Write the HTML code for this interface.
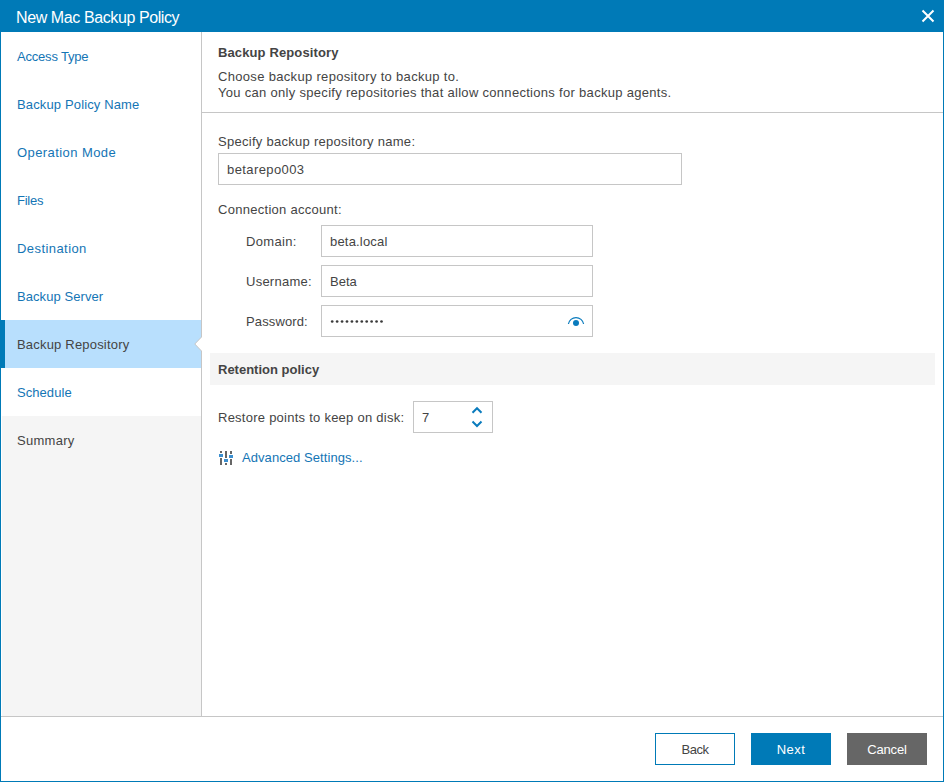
<!DOCTYPE html>
<html><head><meta charset="utf-8">
<style>
html,body{margin:0;padding:0;}
body{width:944px;height:782px;position:relative;overflow:hidden;background:#fff;font-family:"Liberation Sans",sans-serif;font-size:13px;color:#444;}
.a{position:absolute;}
.t{position:absolute;white-space:pre;line-height:16px;}
#title{left:0;top:0;width:944px;height:32px;background:#007ab7;}
#win{left:0;top:32px;width:942px;height:749px;border:1px solid #007ab7;border-top:none;}
#nav{left:1px;top:32px;width:200px;height:684px;background:#fff;}
#navsep{left:201px;top:32px;width:1px;height:684px;background:#c6c6c6;}
.nav{position:absolute;left:17px;color:#1475b5;white-space:pre;line-height:16px;}
#footsep{left:1px;top:716px;width:942px;height:1px;background:#c6c6c6;}
.inp{position:absolute;box-sizing:border-box;border:1px solid #c6c6c6;background:#fff;}
.btn{position:absolute;box-sizing:border-box;top:733px;width:80px;height:32px;text-align:center;line-height:30px;}
</style></head><body>
<div id="title" class="a"></div>
<div class="t" style="left:16px;top:9px;color:#fff;font-size:16px;line-height:18px;letter-spacing:-0.4px;">New Mac Backup Policy</div>
<svg class="a" style="left:920px;top:8px" width="16" height="16" viewBox="0 0 16 16"><path d="M2.5 2.5 L13.5 13.5 M13.5 2.5 L2.5 13.5" stroke="#fff" stroke-width="2" fill="none"/></svg>
<div id="win" class="a"></div>

<!-- nav -->
<div class="a" style="left:2px;top:416px;width:199px;height:300px;background:#f5f5f5;"></div>
<div class="a" style="left:0px;top:320px;width:201px;height:48px;background:#b8dffd;"></div>
<div class="a" style="left:0px;top:320px;width:5px;height:48px;background:#007ab7;"></div>
<div id="navsep" class="a"></div>
<svg class="a" style="left:193px;top:335px" width="10" height="18" viewBox="0 0 10 18"><path d="M8.5 0 L8.5 2 L1.8 9 L8.5 16 L8.5 18 L10 18 L10 0 Z" fill="#fff"/><path d="M8.5 0 L8.5 2 L1.8 9 L8.5 16 L8.5 18" stroke="#c6c6c6" stroke-width="1" fill="none"/></svg>
<div class="nav" style="top:49px;letter-spacing:-0.20px;">Access Type</div>
<div class="nav" style="top:97px;letter-spacing:0.14px;">Backup Policy Name</div>
<div class="nav" style="top:145px;letter-spacing:0.42px;">Operation Mode</div>
<div class="nav" style="top:193px;letter-spacing:-0.25px;">Files</div>
<div class="nav" style="top:241px;letter-spacing:0.43px;">Destination</div>
<div class="nav" style="top:289px;letter-spacing:0.07px;">Backup Server</div>
<div class="nav" style="top:337px;letter-spacing:0.19px;color:#444;">Backup Repository</div>
<div class="nav" style="top:385px;letter-spacing:0.06px;">Schedule</div>
<div class="nav" style="top:433px;letter-spacing:0.27px;color:#444;">Summary</div>

<!-- header -->
<div class="t" style="left:218px;top:45px;letter-spacing:0.12px;font-weight:bold;">Backup Repository</div>
<div class="t" style="left:218px;top:69px;letter-spacing:0.32px;">Choose backup repository to backup to.</div>
<div class="t" style="left:218px;top:85px;letter-spacing:0.30px;">You can only specify repositories that allow connections for backup agents.</div>
<div class="a" style="left:202px;top:112px;width:741px;height:1px;background:#c6c6c6;"></div>

<!-- form -->
<div class="t" style="left:218px;top:134px;letter-spacing:0.28px;">Specify backup repository name:</div>
<div class="inp" style="left:218px;top:153px;width:464px;height:32px;"></div>
<div class="t" style="left:227px;top:162px;letter-spacing:0.40px;">betarepo003</div>
<div class="t" style="left:218px;top:202px;letter-spacing:0.28px;">Connection account:</div>
<div class="t" style="left:246px;top:234px;letter-spacing:0.33px;">Domain:</div>
<div class="inp" style="left:321px;top:225px;width:272px;height:32px;"></div>
<div class="t" style="left:330px;top:234px;letter-spacing:0.19px;">beta.local</div>
<div class="t" style="left:246px;top:274px;letter-spacing:0.25px;">Username:</div>
<div class="inp" style="left:321px;top:265px;width:272px;height:32px;"></div>
<div class="t" style="left:330px;top:274px;letter-spacing:0.00px;">Beta</div>
<div class="t" style="left:246px;top:314px;letter-spacing:0.12px;">Password:</div>
<div class="inp" style="left:321px;top:305px;width:272px;height:32px;"></div>
<svg class="a" style="left:330px;top:317px" width="56" height="9" viewBox="0 0 56 9" fill="#3a3a3a"><circle cx="2.20" cy="4.5" r="1.35"/><circle cx="7.13" cy="4.5" r="1.35"/><circle cx="12.06" cy="4.5" r="1.35"/><circle cx="16.99" cy="4.5" r="1.35"/><circle cx="21.92" cy="4.5" r="1.35"/><circle cx="26.85" cy="4.5" r="1.35"/><circle cx="31.78" cy="4.5" r="1.35"/><circle cx="36.71" cy="4.5" r="1.35"/><circle cx="41.64" cy="4.5" r="1.35"/><circle cx="46.57" cy="4.5" r="1.35"/><circle cx="51.50" cy="4.5" r="1.35"/></svg>
<svg class="a" style="left:566px;top:313px" width="20" height="14" viewBox="0 0 20 14"><path d="M2.4 11 A7.7 7.7 0 0 1 17.6 11" stroke="#0a7bbd" stroke-width="1.2" fill="none"/><circle cx="10" cy="10" r="3" fill="#0a7bbd"/></svg>

<div class="a" style="left:210px;top:353px;width:725px;height:32px;background:#f5f5f5;"></div>
<div class="t" style="left:218px;top:362px;letter-spacing:0.00px;font-weight:bold;">Retention policy</div>

<div class="t" style="left:218px;top:410px;letter-spacing:0.25px;">Restore points to keep on disk:</div>
<div class="inp" style="left:413px;top:401px;width:80px;height:32px;"></div>
<div class="t" style="left:422px;top:410px;letter-spacing:0.00px;">7</div>
<svg class="a" style="left:470px;top:404px" width="14" height="26" viewBox="0 0 14 26"><path d="M2.5 8.7 L7 4.2 L11.5 8.7 M2.5 17.5 L7 22 L11.5 17.5" stroke="#0a7bbd" stroke-width="2" fill="none"/></svg>

<svg class="a" style="left:218px;top:450px" width="16" height="16" viewBox="0 0 16 16">
<rect x="2" y="1" width="2" height="2" fill="#666"/><rect x="1" y="4" width="4" height="3" fill="#3b8fd0"/><rect x="2" y="8" width="2" height="7" fill="#666"/>
<rect x="7" y="1" width="2" height="7" fill="#666"/><rect x="6" y="9" width="4" height="3" fill="#3b8fd0"/><rect x="7" y="13" width="2" height="2" fill="#666"/>
<rect x="12" y="1" width="2" height="3" fill="#666"/><rect x="11" y="5" width="4" height="3" fill="#3b8fd0"/><rect x="12" y="9" width="2" height="6" fill="#666"/>
</svg>
<div class="t" style="left:242px;top:450px;letter-spacing:0.07px;color:#1475b5;">Advanced Settings...</div>

<!-- footer -->
<div id="footsep" class="a"></div>
<div class="btn" style="left:655px;border:1px solid #007ab7;color:#444;line-height:31px;letter-spacing:-0.5px;">Back</div>
<div class="btn" style="left:751px;background:#007ab7;color:#fff;line-height:33px;letter-spacing:0.4px;">Next</div>
<div class="btn" style="left:847px;background:#666;color:#fff;line-height:33px;letter-spacing:-0.2px;">Cancel</div>
</body></html>
